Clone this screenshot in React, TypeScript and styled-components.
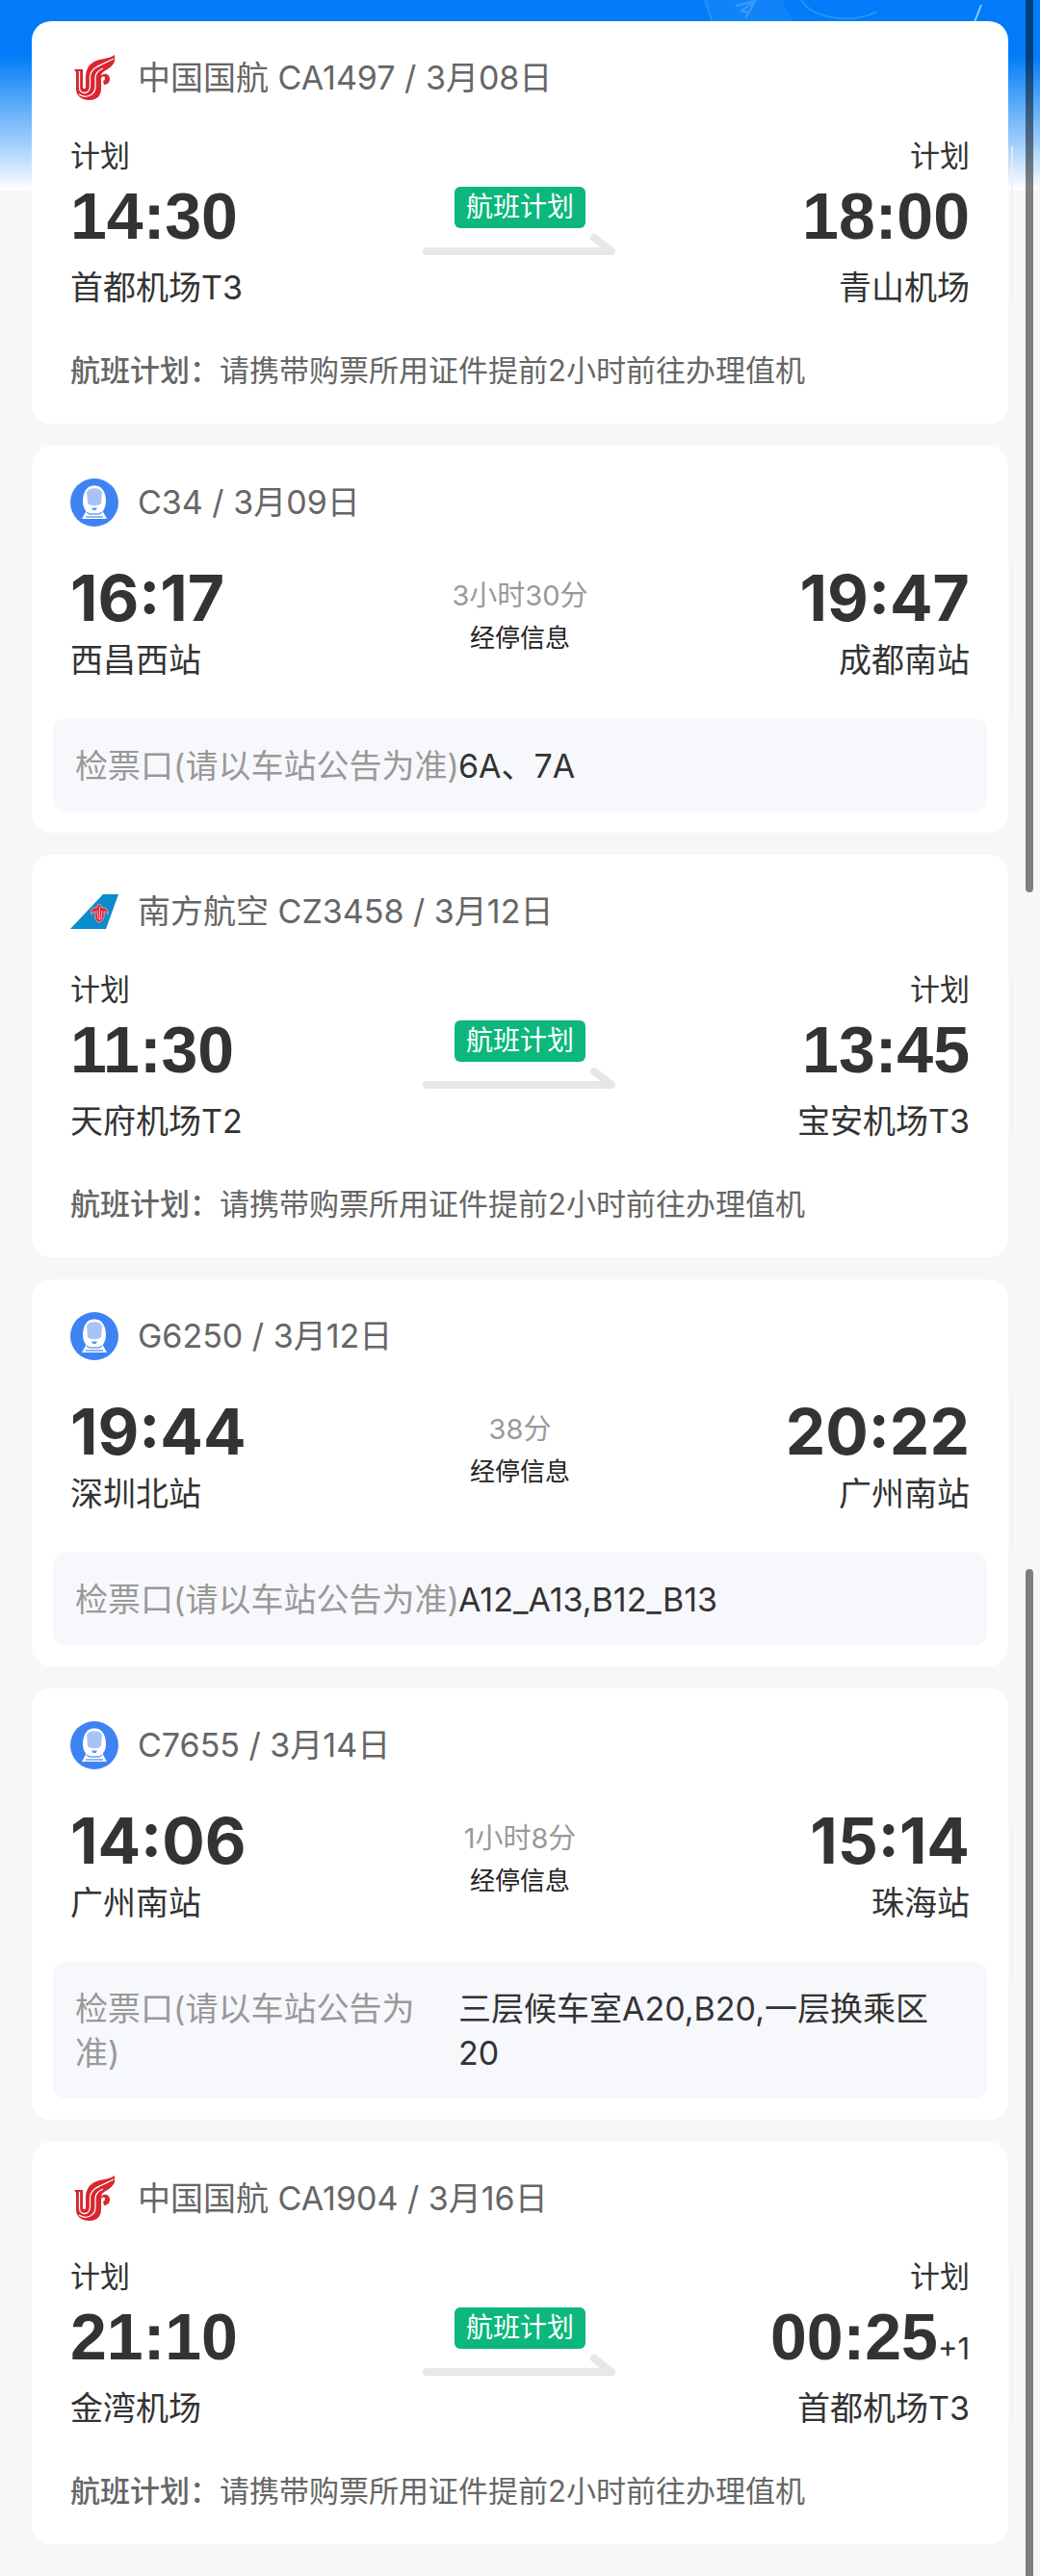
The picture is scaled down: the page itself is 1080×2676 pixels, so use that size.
import React from "react";
import styled, { createGlobalStyle, css } from "styled-components";

const GlobalStyle = createGlobalStyle`
  *, *::before, *::after { box-sizing: border-box; }
  body {
    margin: 0;
    background: #f7f7f8;
    color: #333;
    font-family: Inter, "Noto Sans CJK SC", sans-serif;
  }
  h2, p { margin: 0; font-weight: 400; }
`;

const Page = styled.main`
  position: relative;
  overflow: hidden;
  padding: 22px 33px 33px;
`;

const Sky = styled.div`
  position: absolute;
  inset: 0 0 auto;
  height: 198px;
  background: linear-gradient(#027cf8 0, #027cf8 58px, #4ba3fa 100px, #a3cffb 150px, #fff 198px);
`;

const SkyArt = styled.svg`
  position: absolute;
  top: 0;
  right: 0;
  width: 380px;
  height: 60px;
`;

const ScrollThumb = styled.div<{ $from: string; $to: string }>`
  position: absolute;
  z-index: 1;
  right: 7px;
  top: ${(p) => p.$from};
  bottom: ${(p) => p.$to};
  width: 8px;
  border-radius: 4px;
  background: rgba(0, 0, 0, 0.49);
`;

const List = styled.div`
  position: relative;
  display: flex;
  flex-direction: column;
  gap: 23px;
`;

const Card = styled.article`
  position: relative;
  padding: 34px 22px 22px;
  border-radius: 20px;
  background: #fff;

  &::after {
    content: "";
    position: absolute;
    top: calc(50% - 79px);
    right: -5px;
    width: 2px;
    height: 158px;
    background: rgba(238, 238, 240, 0.8);
  }
`;

const Header = styled.header`
  display: flex;
  align-items: center;
  gap: 20px;
  height: 50px;
  padding: 0 18px;
`;

const Title = styled.h2`
  color: #666;
  font-size: 34px;
  line-height: 46px;
`;

const Logo = styled.svg`
  flex: none;
  width: 50px;
  height: 50px;
`;

const Route = styled.div<{ $flight?: boolean }>`
  display: grid;
  grid-template-columns: 1fr 202px 1fr;
  padding: ${(p) => (p.$flight ? "36px 18px 0" : "34px 18px 0")};
`;

const Stop = styled.div<{ $end?: boolean }>`
  display: flex;
  flex-direction: column;
  align-items: ${(p) => (p.$end ? "flex-end" : "flex-start")};
`;

const Plan = styled.span`
  font-size: 31px;
  line-height: 40px;
`;

const Time = styled.time<{ $flight?: boolean }>`
  font-weight: 700;
  ${(p) =>
    p.$flight
      ? css`
          font-family: "Liberation Sans", Arial, sans-serif;
          font-size: 68px;
          line-height: 84px;
        `
      : css`
          font-size: 66px;
          line-height: 80px;
        `}
`;

const DayShift = styled.small`
  font-family: Inter, sans-serif;
  font-size: 31px;
  font-weight: 400;
  line-height: 1;
`;

const Place = styled.span<{ $flight?: boolean }>`
  padding-top: ${(p) => (p.$flight ? "10px" : "2px")};
  font-size: 34px;
  line-height: 46px;
`;

const Middle = styled.div<{ $flight?: boolean }>`
  display: flex;
  flex-direction: column;
  align-items: center;
  padding-top: ${(p) => (p.$flight ? "52px" : "18px")};
`;

const Badge = styled.span`
  padding: 0 12px;
  border-radius: 6px;
  background: #0cb77c;
  color: #fff;
  font-size: 28px;
  line-height: 43px;
`;

const Arrow = styled.svg`
  width: 202px;
  height: 24px;
  margin-top: 5px;
`;

const Duration = styled.span`
  color: #999;
  font-size: 29px;
  line-height: 40px;
`;

const StopsButton = styled.button`
  padding: 0 10px;
  border: 0;
  background: none;
  color: #222;
  font: inherit;
  font-size: 26px;
  line-height: 48px;
`;

const Note = styled.p`
  padding: 41px 18px 11px;
  color: #666;
  font-size: 31px;
  line-height: 44px;
`;

const NoteLabel = styled.strong`
  font-weight: 500;
`;

const Gate = styled.div`
  display: flex;
  margin-top: 38px;
  padding: 26px 23px 24px;
  border-radius: 12px;
  background: #f7f8fc;
  font-size: 34px;
  line-height: 46px;
`;

const GateLabel = styled.span<{ $wrap?: boolean }>`
  flex: none;
  width: 398px;
  padding-right: ${(p) => (p.$wrap ? "20px" : "0")};
  white-space: ${(p) => (p.$wrap ? "normal" : "nowrap")};
  color: #999;
`;

const GateValue = styled.span`
  flex: 1;
  padding-right: 12px;
`;

type Carrier = "airchina" | "southern" | "train";

interface Trip {
  carrier: Carrier;
  title: string;
  from: [string, string];
  to: [string, string];
  shift?: string;
  duration?: string;
  gate?: string;
}

const trips: Trip[] = [
  { carrier: "airchina", title: "中国国航 CA1497 / 3月08日", from: ["14:30", "首都机场T3"], to: ["18:00", "青山机场"] },
  { carrier: "train", title: "C34 / 3月09日", from: ["16:17", "西昌西站"], to: ["19:47", "成都南站"], duration: "3小时30分", gate: "6A、7A" },
  { carrier: "southern", title: "南方航空 CZ3458 / 3月12日", from: ["11:30", "天府机场T2"], to: ["13:45", "宝安机场T3"] },
  { carrier: "train", title: "G6250 / 3月12日", from: ["19:44", "深圳北站"], to: ["20:22", "广州南站"], duration: "38分", gate: "A12_A13,B12_B13" },
  { carrier: "train", title: "C7655 / 3月14日", from: ["14:06", "广州南站"], to: ["15:14", "珠海站"], duration: "1小时8分", gate: "三层候车室A20,B20,一层换乘区20" },
  { carrier: "airchina", title: "中国国航 CA1904 / 3月16日", from: ["21:10", "金湾机场"], to: ["00:25", "首都机场T3"], shift: "+1" },
];

function CarrierLogo({ carrier }: { carrier: Carrier }) {
  if (carrier === "train") {
    return (
      <Logo viewBox="0 0 50 50" aria-hidden="true">
        <circle cx="25" cy="25" r="25" fill="#3f83f3" />
        <path d="M17 33h16l5 9H12z" fill="#fff" />
        <path d="M19 9c3-2 9-2 12 0 4 3 6 8 6 15 0 5-2 9-5 12H18c-3-3-5-7-5-12 0-7 2-12 6-15z" fill="#fff" />
        <path d="M20 11c3-1 7-1 10 0l3 3-1 12c-3 3-11 3-14 0l-1-12z" fill="#a9c3f8" />
        <path d="M22 30.500h6L26.500 33h-3z" fill="#5d93f5" />
        <path d="M17 35l3 2h10l3-2M16 40h18" fill="none" stroke="#6d9df5" strokeWidth="1.500" />
      </Logo>
    );
  }
  if (carrier === "southern") {
    return (
      <Logo viewBox="0 0 50 50" aria-hidden="true">
        <path d="M34 7h16L37 43H0z" fill="#0a8bcb" />
        <path
          d="M22 28c-1-4 1-8 5-7 0-2 2-3 3-4 1 1 3 2 3 4 4-1 7 3 6 7-1-2-2-3-4-3 1 5-1 11-5 11s-5-6-4-11c-2 0-3 1-4 3z"
          fill="#e0283c"
          stroke="#f6b8c0"
          strokeWidth="0.8"
        />
        <path d="M28 24l1 9M30.500 20v14M33 24l-1 9" fill="none" stroke="#f6b8c0" strokeWidth="0.900" />
      </Logo>
    );
  }
  return (
    <Logo viewBox="0 0 50 50" aria-hidden="true">
      <path
        d="M46 1C40 6 29 4 22 10c-4 3-6 8-6 14v10c0 3-3 3-3 0V16l-9 0 2 3v17c0 8 6 12 14 12 8 0 12-5 12-12V26c0-3 4-3 4-1 0 2-1 3-2 3l1 4c4 0 6-3 6-6 0-5-6-7-9-3 1-7 9-5 14-15z"
        fill="#d8262f"
      />
      <g fill="none" stroke="#fff" strokeWidth="1.300">
        <path d="M9.500 18v17c0 7 10 8 11-1V24C21 14 31 12 45 5" />
        <path d="M9 42c7 5 17 1 17-8V25c0-5 3-8 8-10" />
      </g>
    </Logo>
  );
}

function TripCard({ trip }: { trip: Trip }) {
  const flight = trip.carrier !== "train";
  const longGate = (trip.gate ?? "").length > 16;
  return (
    <Card>
      <Header>
        <CarrierLogo carrier={trip.carrier} />
        <Title>{trip.title}</Title>
      </Header>
      <Route $flight={flight}>
        <Stop>
          {flight && <Plan>计划</Plan>}
          <Time $flight={flight}>{trip.from[0]}</Time>
          <Place $flight={flight}>{trip.from[1]}</Place>
        </Stop>
        <Middle $flight={flight}>
          {flight ? (
            <>
              <Badge>航班计划</Badge>
              <Arrow viewBox="0 0 202 24" aria-hidden="true">
                <path d="M4 19H196L178 5" fill="none" stroke="#e7e7e7" strokeWidth="8" strokeLinecap="round" strokeLinejoin="round" />
              </Arrow>
            </>
          ) : (
            <>
              <Duration>{trip.duration}</Duration>
              <StopsButton type="button">经停信息</StopsButton>
            </>
          )}
        </Middle>
        <Stop $end>
          {flight && <Plan>计划</Plan>}
          <Time $flight={flight}>
            {trip.to[0]}
            {trip.shift && <DayShift>{trip.shift}</DayShift>}
          </Time>
          <Place $flight={flight}>{trip.to[1]}</Place>
        </Stop>
      </Route>
      {flight ? (
        <Note>
          <NoteLabel>航班计划：</NoteLabel>请携带购票所用证件提前2小时前往办理值机
        </Note>
      ) : (
        <Gate>
          <GateLabel $wrap={longGate}>检票口(请以车站公告为准)</GateLabel>
          <GateValue>{trip.gate}</GateValue>
        </Gate>
      )}
    </Card>
  );
}

export default function App() {
  return (
    <Page>
      <GlobalStyle />
      <Sky />
      <SkyArt viewBox="0 0 380 60" aria-hidden="true">
        <path d="M32 0l8 24h84L112 0z" fill="#fff" opacity="0.060" />
        <g fill="none" stroke="#5aa9fb" strokeWidth="1.500" opacity="0.550">
          <path d="M32 0l8 24M132 0c14 22 58 24 78 12" />
          <path d="M64 6l20-5-10 18M84 1L70 11l6 2" strokeWidth="2.500" />
        </g>
        <path d="M319 5l-7 18" stroke="#8cc4fd" strokeWidth="2" />
      </SkyArt>
      <ScrollThumb $from="-8px" $to="65.36%" />
      <ScrollThumb $from="60.91%" $to="-8px" />
      <List>
        {trips.map((trip) => (
          <TripCard key={trip.title} trip={trip} />
        ))}
      </List>
    </Page>
  );
}
